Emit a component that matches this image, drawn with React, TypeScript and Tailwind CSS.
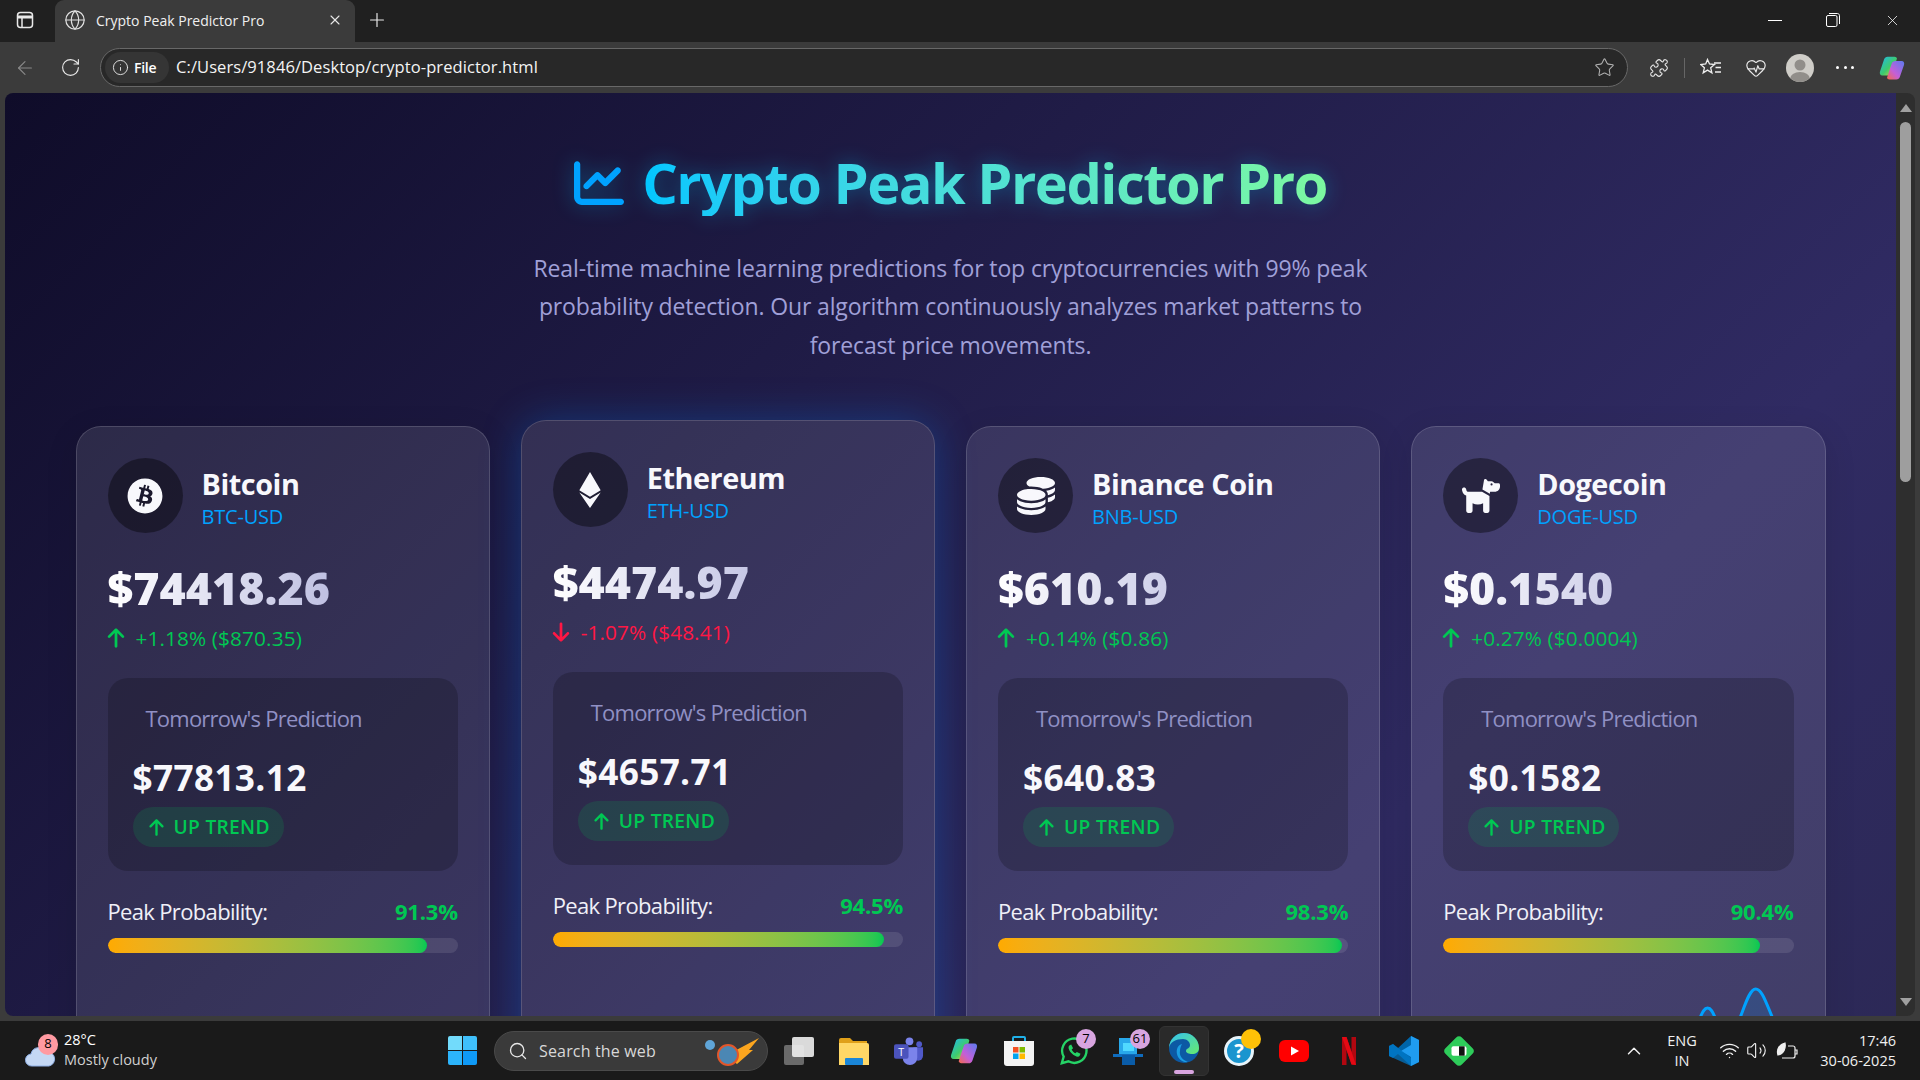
import React from 'react'
import { ArrowLeft, Globe, Info, Plus, RotateCw, Star, X, Puzzle, HeartPulse, Search, ChevronUp, Wifi, Volume2 } from 'lucide-react'
import { FaArrowDown, FaArrowUp, FaBitcoin, FaChartLine, FaCoins, FaDog, FaEthereum } from 'react-icons/fa6'

const coins = [
  { name: 'Bitcoin', symbol: 'BTC-USD', icon: <FaBitcoin className="text-[36px]" />, price: '$74418.26', change: '+1.18% ($870.35)', up: true, pred: '$77813.12', prob: 91.3 },
  { name: 'Ethereum', symbol: 'ETH-USD', icon: <FaEthereum className="text-[36px]" />, price: '$4474.97', change: '-1.07% ($48.41)', up: false, pred: '$4657.71', prob: 94.5 },
  { name: 'Binance Coin', symbol: 'BNB-USD', icon: <FaCoins className="text-[38px]" />, price: '$610.19', change: '+0.14% ($0.86)', up: true, pred: '$640.83', prob: 98.3 },
  { name: 'Dogecoin', symbol: 'DOGE-USD', icon: <FaDog className="text-[38px]" />, price: '$0.1540', change: '+0.27% ($0.0004)', up: true, pred: '$0.1582', prob: 90.4 },
]

const sparkLine = 'M230 90 C245 80 250 60 256 44 C259 36 261 33 264 33 C267 33 269 36 272 44 C276 56 285 60 292 52 C298 44 304 14 312 14 C319 14 323 30 332 50 C338 62 345 70 349 75'

const CoinCard = ({ coin, lifted, showSpark }: { coin: (typeof coins)[number]; lifted: boolean; showSpark: boolean }) => (
  <div className={`h-[1000px] rounded-[25px] border border-white/15 bg-white/10 p-[31px] ${lifted ? '-translate-y-1.5 shadow-[0_0_40px_rgba(0,130,255,0.28)]' : 'shadow-[0_8px_32px_rgba(0,0,0,0.12)]'}`}>
    <div className="flex items-center gap-[19px]">
      <div className="flex h-[75px] w-[75px] items-center justify-center rounded-full bg-black/40 text-[#f8f8fc]">{coin.icon}</div>
      <div className="pt-[3px]">
        <div className="text-[28.8px] leading-[36px] font-bold tracking-[-0.015em] text-[#f8f8fc]">{coin.name}</div>
        <div className="mt-[3px] text-[20px] leading-[24px] tracking-[-0.01em] text-[#00a2ff]">{coin.symbol}</div>
      </div>
    </div>
    <div className="mt-[28px] bg-gradient-to-r from-white to-[#9c9cd0] bg-clip-text text-[44.8px] leading-[54px] font-extrabold text-transparent">{coin.price}</div>
    <div className={`mt-[9px] flex h-[28px] items-center gap-[9px] text-[20.8px] tracking-[0.005em] ${coin.up ? 'text-[#00c853]' : 'text-[#ff1744]'}`}>
      {coin.up ? <FaArrowUp className="-ml-[3px] text-[22px]" /> : <FaArrowDown className="-ml-[3px] text-[22px]" />}
      <span>{coin.change}</span>
    </div>
    <div className="mt-[26px] h-[193px] rounded-[20px] bg-black/20 px-[25px] pt-[24px]">
      <div className="pl-[13px] text-[22px] leading-[32px] tracking-[-0.035em] text-[#9090c4]">Tomorrow's Prediction</div>
      <div className="mt-[22px] text-[35.2px] leading-[42px] font-bold tracking-[0.01em] text-[#f8f8fc]">{coin.pred}</div>
      <div className="mt-[9px] inline-flex h-[40px] items-center gap-[8px] rounded-[20px] bg-[#00c853]/15 px-[14px] text-[19.2px] font-semibold tracking-[0.015em] text-[#00c853]">
        <FaArrowUp className="text-[19px]" />
        UP TREND
      </div>
    </div>
    <div className="mt-[25px] flex items-center justify-between text-[22px] leading-[30px]">
      <span className="tracking-[-0.03em] text-[#f0f0f8]">Peak Probability:</span>
      <span className="font-bold tracking-[-0.01em] text-[#00c853]">{coin.prob}%</span>
    </div>
    <div className="mt-[12px] h-[15px] overflow-hidden rounded-full bg-white/10">
      <div className="h-full rounded-full bg-gradient-to-r from-[#ffaa00] to-[#00c853]" style={{ width: `${coin.prob}%` }} />
    </div>
    <div className="mt-[22px] h-[200px]">
      {showSpark && (
        <svg viewBox="0 0 349 200" className="h-full w-full" fill="none">
          <path d={`${sparkLine} L349 200 L230 200 Z`} fill="#00a2ff" fillOpacity="0.15" />
          <path d={sparkLine} stroke="#00a2ff" strokeWidth="3" />
        </svg>
      )}
    </div>
  </div>
)

const Badge = ({ children, color = 'bg-[#d8a5e0]' }: { children?: React.ReactNode; color?: string }) => (
  <span className={`absolute -top-[7px] -right-[7px] flex h-[20px] w-[20px] items-center justify-center rounded-full text-[13px] text-black ${color}`}>{children}</span>
)

const TaskIcon = ({ children, className = 'mx-[12px]', badge, color }: { children: React.ReactNode; className?: string; badge?: string; color?: string }) => (
  <div className={`relative flex h-[30px] w-[30px] shrink-0 items-center justify-center ${className}`}>
    {children}
    {(badge !== undefined) && <Badge color={color}>{badge}</Badge>}
  </div>
)

const CopilotIcon = ({ size }: { size: number }) => (
  <svg width={size} height={size} viewBox="0 0 32 32">
    <defs>
      <linearGradient id={`cp1${size}`} x1="0" y1="0" x2="1" y2="1"><stop offset="0" stopColor="#1fb8f0" /><stop offset="0.55" stopColor="#3ecb6c" /><stop offset="1" stopColor="#f5d33c" /></linearGradient>
      <linearGradient id={`cp2${size}`} x1="1" y1="0" x2="0" y2="1"><stop offset="0" stopColor="#5a7bf0" /><stop offset="0.6" stopColor="#c45fd8" /><stop offset="1" stopColor="#f56a4a" /></linearGradient>
    </defs>
    <path d="M11 3h8c1.5 0 2.2.8 2.7 2L16 22c-.5 1.5-1.5 2.500-3 2.500H5C2.500 24.500 1.500 22.500 2.300 20L7 6c.7-2 2-3 4-3z" fill={`url(#cp1${size})`} />
    <path d="M21 8h6c2.500 0 3.500 2 2.700 4.500L25 26c-.7 2-2 3-4 3h-8c-1.500 0-2.200-.8-2.700-2L16 10c.5-1.500 3-2 5-2z" fill={`url(#cp2${size})`} />
  </svg>
)

const App = () => {
  return (
    <div className="flex h-screen w-full flex-col overflow-hidden bg-[#3b3b3b] font-['Open_Sans',sans-serif]">
      {/* tab strip */}
      <div className="flex h-[42px] shrink-0 items-end bg-[#202020] text-white">
        <div className="flex h-[42px] w-[55px] items-center justify-center pr-[6px] pb-[2px]">
          <svg width="18" height="18" viewBox="0 0 18 18" fill="none" stroke="#e8e8e8" strokeWidth="1.5"><rect x="1.500" y="1.500" width="15" height="15" rx="3" /><path d="M1.500 6h15" strokeWidth="3" /><path d="M6 6v10" /></svg>
        </div>
        <div className="flex h-[42px] w-[300px] items-center rounded-t-[9px] bg-[#3b3b3b] pr-[12px] pb-[2px] pl-[9px]">
          <Globe size={22} strokeWidth={1.3} className="text-[#e0e0e0]" />
          <span className="ml-[10px] flex-1 text-[14px] text-[#f0f0f0]">Crypto Peak Predictor Pro</span>
          <X size={16} strokeWidth={1.6} className="text-[#e8e8e8]" />
        </div>
        <div className="flex h-[42px] w-[44px] items-center justify-center pb-[2px]"><Plus size={22} strokeWidth={1.3} className="text-[#e8e8e8]" /></div>
        <div className="ml-auto flex h-[42px] items-center gap-[44px] pr-[19px] pb-[2px]">
          <div className="h-[1px] w-[14px] bg-white" />
          <svg width="14" height="14" viewBox="0 0 14 14" fill="none" stroke="#fff" strokeWidth="1"><rect x="0.500" y="2.500" width="10.500" height="11" rx="1.500" /><path d="M3 .5h8.500c1 0 2 1 2 2V11" /></svg>
          <X size={17} strokeWidth={1.1} className="text-white" />
        </div>
      </div>

      {/* toolbar */}
      <div className="flex h-[51px] shrink-0 items-center text-[#e8e8e8]">
        <div className="flex w-[50px] justify-center"><ArrowLeft size={22} strokeWidth={1.2} className="text-[#8a8a8a]" /></div>
        <div className="flex w-[40px] justify-center"><RotateCw size={21} strokeWidth={1.3} /></div>
        <div className="ml-[10px] flex h-[39px] w-[1528px] items-center rounded-full border-[1.5px] border-[#686868] bg-[#282828] pr-[12px] pl-[4px]">
          <div className="flex h-[31px] w-[64px] items-center gap-[5px] rounded-full bg-[#353535] pl-[7px]">
            <Info size={17} strokeWidth={1.3} />
            <span className="text-[14px] font-semibold tracking-[-0.02em] text-white">File</span>
          </div>
          <span className="ml-[7px] flex-1 text-[16.500px] tracking-[0.005em] text-[#f4f4f4]">C:/Users/91846/Desktop/crypto-predictor.html</span>
          <Star size={21} strokeWidth={1.2} className="text-[#b0b0b0]" />
        </div>
        <div className="ml-[20px] flex w-[22px] justify-center"><Puzzle size={20} strokeWidth={1.3} /></div>
        <div className="ml-[14px] h-[20px] w-[1px] bg-[#666]" />
        <div className="ml-[15px]">
          <svg width="22" height="20" viewBox="0 0 22 20" fill="none" stroke="#eee" strokeWidth="1.300"><path d="M7.500 1.500l2 4.500 5 .5-3.800 3.300 1.200 5-4.400-2.700-4.300 2.700 1.200-5L.7 6.500l5-.5z" /><path d="M14 5h7M15.500 9.500H21M15 14h6" /></svg>
        </div>
        <div className="ml-[23px]"><HeartPulse size={22} strokeWidth={1.3} /></div>
        <div className="ml-[19px] flex h-[28px] w-[28px] items-end justify-center overflow-hidden rounded-full bg-[#cfcdc8]">
          <svg width="28" height="28" viewBox="0 0 28 28" fill="#918e8a"><circle cx="14" cy="11" r="5.500" /><ellipse cx="14" cy="25" rx="10" ry="7" /></svg>
        </div>
        <div className="ml-[22px] flex w-[18px] justify-between">
          <span className="h-[3px] w-[3px] rounded-full bg-white" />
          <span className="h-[3px] w-[3px] rounded-full bg-white" />
          <span className="h-[3px] w-[3px] rounded-full bg-white" />
        </div>
        <div className="ml-[24px]"><CopilotIcon size={28} /></div>
      </div>

      {/* page */}
      <div className="mx-[5px] flex h-[923px] shrink-0 overflow-hidden rounded-t-[8px] rounded-b-[8px]">
        <div className="min-w-0 flex-1 overflow-hidden">
          <div className="h-[2340px] bg-[linear-gradient(135deg,#0f0c29,#302b63,#24243e)] pt-[56px]">
            <h1 className="flex items-center justify-center gap-[18px] text-[56px] leading-[67px] font-bold drop-shadow-[0_0_10px_rgba(0,198,255,0.35)]">
              <FaChartLine className="text-[#00a2ff]" size={50} />
              <span className="bg-gradient-to-r from-[#00c6ff] to-[#7cf8a0] bg-clip-text tracking-[-0.027em] text-transparent">Crypto Peak Predictor Pro</span>
            </h1>
            <p className="mt-[33px] text-center text-[23px] leading-[38.400px] tracking-[-0.006em] text-[#a0a0d8]">
              Real-time machine learning predictions for top cryptocurrencies with 99% peak<br />
              probability detection. Our algorithm continuously analyzes market patterns to<br />
              forecast price movements.
            </p>
            <div className="mx-auto mt-[62px] grid w-[1750px] grid-cols-4 gap-[31px]">
              {coins.map((coin, i) => (
                <CoinCard key={coin.name} coin={coin} lifted={i === 1} showSpark={i === 3} />
              ))}
            </div>
          </div>
        </div>
        <div className="flex w-[19px] shrink-0 flex-col items-center bg-[#2e2e2e]">
          <div className="mt-[11px] h-0 w-0 border-x-[6px] border-b-[8px] border-x-transparent border-b-[#a0a0a0]" />
          <div className="mt-[10px] h-[360px] w-[11px] rounded-full bg-[#9e9e9e]" />
          <div className="mt-auto mb-[10px] h-0 w-0 border-x-[6px] border-t-[8px] border-x-transparent border-t-[#a0a0a0]" />
        </div>
      </div>

      {/* taskbar */}
      <div className="mt-auto flex h-[59px] shrink-0 items-center bg-[#1a1a1a] text-white">
        <div className="relative ml-[24px] h-[30px] w-[32px]">
          <svg width="32" height="24" viewBox="0 0 32 24" className="mt-[8px]"><path d="M8 22a6 6 0 0 1-1-12 8 8 0 0 1 15-2 7 7 0 0 1 3 14z" fill="#c4d8f4" stroke="#8fb0e6" /></svg>
          <span className="absolute -top-[2px] left-[14px] flex h-[21px] w-[20px] items-center justify-center rounded-full bg-[#ff9aa2] text-[13px] text-black">8</span>
        </div>
        <div className="ml-[8px] w-[100px] pb-[2px] text-[14.500px] leading-[20px]">
          <div>28°C</div>
          <div className="text-[#d0d0d0]">Mostly cloudy</div>
        </div>
        <div className="ml-[284px] grid h-[29px] w-[29px] grid-cols-2 gap-[1.500px]">
          <span className="rounded-tl-[2px] bg-[#72dbfb]" /><span className="rounded-tr-[2px] bg-[#3fc0fb]" />
          <span className="rounded-bl-[2px] bg-[#2cb4fb]" /><span className="rounded-br-[2px] bg-[#0f9af7]" />
        </div>
        <div className="ml-[17px] flex h-[40px] w-[274px] items-center rounded-full border border-[#4a4a4a] bg-[#3a3a3a] pl-[13px]">
          <Search size={20} strokeWidth={1.6} className="text-[#e8e8e8]" />
          <span className="ml-[11px] flex-1 text-[16px] tracking-[0.01em] text-[#d8d8d8]">Search the web</span>
          <svg width="60" height="30" viewBox="0 0 60 30" className="mr-[6px]">
            <path d="M24 20L58 2 48 14 52 14 36 28z" fill="#fba51e" />
            <circle cx="27" cy="19" r="10" fill="#4b87b4" stroke="#e2562a" strokeWidth="2" />
            <circle cx="9" cy="9" r="5" fill="#5fa5d8" />
          </svg>
        </div>
        <TaskIcon className="ml-[16px]">
          <div className="relative h-[28px] w-[30px]">
            <div className="absolute bottom-0 left-0 h-[20px] w-[20px] rounded-[2px] bg-[#6a6a6a]" />
            <div className="absolute top-0 right-0 h-[20px] w-[22px] rounded-[2px] bg-[#f0f0f0]/90" />
          </div>
        </TaskIcon>
        <TaskIcon className="ml-[25px]">
          <svg width="30" height="28" viewBox="0 0 30 28"><path d="M0 3a2 2 0 0 1 2-2h9l3 3h14v22a2 2 0 0 1-2 2H0z" fill="#e0a019" /><path d="M0 6h28a2 2 0 0 1 2 2v20H0z" fill="#ffd766" /><rect x="6" y="21" width="18" height="7" rx="1" fill="#1a86d8" /></svg>
        </TaskIcon>
        <TaskIcon className="ml-[25px]">
          <svg width="31" height="30" viewBox="0 0 31 30"><circle cx="16" cy="5" r="4" fill="#7b83eb" /><circle cx="26" cy="8" r="3" fill="#5059c9" /><path d="M20 11h10v9a5 5 0 0 1-10 0z" fill="#5059c9" /><path d="M9 11h15v11a7 7 0 0 1-15 0z" fill="#7b83eb" /><rect x="0" y="8" width="15" height="15" rx="2" fill="#4b53bc" /><text x="7.500" y="20" fontSize="11" fill="#fff" textAnchor="middle" fontFamily="Open Sans">T</text></svg>
        </TaskIcon>
        <TaskIcon className="ml-[25px]"><CopilotIcon size={30} /></TaskIcon>
        <TaskIcon className="ml-[25px]">
          <svg width="30" height="32" viewBox="0 0 30 32"><path d="M9 7V3a1 1 0 0 1 1-1h10a1 1 0 0 1 1 1v4" fill="none" stroke="#1fb0e8" strokeWidth="2" /><path d="M0 6h30v22a3 3 0 0 1-3 3H3a3 3 0 0 1-3-3z" fill="#f4f4f4" /><rect x="9" y="12" width="5.500" height="5.500" fill="#f25022" /><rect x="15.500" y="12" width="5.500" height="5.500" fill="#7fba00" /><rect x="9" y="18.500" width="5.500" height="5.500" fill="#00a4ef" /><rect x="15.500" y="18.500" width="5.500" height="5.500" fill="#ffb900" /></svg>
        </TaskIcon>
        <TaskIcon className="ml-[25px]" badge="7">
          <svg width="32" height="32" viewBox="0 0 32 32" fill="none"><path d="M3 29l2-7a13 13 0 1 1 5 5z" stroke="#25d366" strokeWidth="2.500" /><path d="M11 10c-2 2 0 6 3 9s7 4 8 2l1-2-4-2-1.500 1.500c-1.500-.5-3.500-2.500-4-4L15 13l-2-4z" fill="#25d366" /></svg>
        </TaskIcon>
        <TaskIcon className="ml-[24px]" badge="61">
          <svg width="30" height="30" viewBox="0 0 30 30"><rect x="6" y="2" width="18" height="17" fill="#28a8ea" /><rect x="10" y="7" width="11" height="8" fill="#50d9ff" /><rect x="0" y="18" width="30" height="3" fill="#0f6cbd" /><rect x="9" y="19" width="13" height="10" fill="#0a5ca8" /></svg>
        </TaskIcon>
        <div className="relative ml-[16px] flex h-[50px] w-[50px] shrink-0 items-center justify-center rounded-[6px] border border-[#333] bg-[#2a2a2a]">
          <svg width="30" height="32" viewBox="0 0 30 32" className="-mt-[6px]"><defs><linearGradient id="edg" x1="0" y1="0" x2="1" y2="1"><stop offset="0" stopColor="#35c1f1" /><stop offset="1" stopColor="#66eb6e" /></linearGradient></defs><circle cx="15" cy="16" r="15" fill="#0c59a4" /><path d="M0 16A15 15 0 0 1 30 16c0 4-3 6-7 6-3 0-6-1-6-3 0-3 4-2 4-6 0-3-3-6-7-6C7 7 1 10 0 16z" fill="url(#edg)" /><path d="M13 12c-4 1-6 5-5 10s6 9 11 8c-6-2-9-7-8-11 0-3 1-5 2-7z" fill="#1b9de2" /></svg>
          <span className="absolute bottom-[1px] h-[4px] w-[20px] rounded-full bg-[#d8a5e0]" />
        </div>
        <TaskIcon className="ml-[15px]" badge="" color="bg-[#ffc107]">
          <div className="flex h-[30px] w-[30px] items-center justify-center rounded-full border-[3px] border-[#e8f4fa] bg-[#1a95cf] text-[20px] leading-none font-bold text-white">?</div>
        </TaskIcon>
        <TaskIcon className="ml-[25px]">
          <svg width="30" height="22" viewBox="0 0 30 22"><rect width="30" height="22" rx="6" fill="#f00" /><path d="M12 6.500l8 4.500-8 4.500z" fill="#fff" /></svg>
        </TaskIcon>
        <TaskIcon className="ml-[25px]">
          <svg width="14" height="28" viewBox="0 0 14 28"><path d="M0 0h4.500l5 15V0H14v28l-4.500-.6-5-15V28H0z" fill="#b20710" /><path d="M0 0h4.500l9.500 28-4.500-.6z" fill="#e50914" /></svg>
        </TaskIcon>
        <TaskIcon className="ml-[25px]">
          <svg width="30" height="30" viewBox="0 0 30 30"><path d="M22 0l8 4v22l-8 4L9 18l-5 4-4-2V10l4-2 5 4z" fill="#0065a9" /><path d="M22 0l8 4v22l-8 4V21L12 15l10-6z" fill="#1f9cf0" /><path d="M0 10l4-2 18 14v8L0 20z" fill="#007acc" opacity="0.7" /></svg>
        </TaskIcon>
        <TaskIcon className="ml-[25px]">
          <svg width="32" height="32" viewBox="0 0 32 32"><path d="M13 1.500a4 4 0 0 1 6 0L30.500 13a4 4 0 0 1 0 6L19 30.500a4 4 0 0 1-6 0L1.500 19a4 4 0 0 1 0-6z" fill="#2ecc5a" /><rect x="8" y="11" width="16" height="10" rx="2" fill="#fff" /><rect x="16" y="11" width="6" height="10" fill="#111" /></svg>
        </TaskIcon>
        <ChevronUp size={22} strokeWidth={1.6} className="ml-[149px] shrink-0 text-[#f0f0f0]" />
        <div className="ml-[17px] w-[40px] shrink-0 text-center text-[14.500px] leading-[20px] text-[#f0f0f0]">
          <div>ENG</div>
          <div>IN</div>
        </div>
        <Wifi size={21} strokeWidth={1.6} className="ml-[17px] shrink-0 text-[#f0f0f0]" />
        <Volume2 size={21} strokeWidth={1.3} className="ml-[6px] shrink-0 text-[#f0f0f0]" />
        <svg width="22" height="18" viewBox="0 0 22 18" fill="none" stroke="#f0f0f0" strokeWidth="1.200" className="ml-[9px] shrink-0"><path d="M6 16h11a2 2 0 0 0 2-2V6a2 2 0 0 0-2-2h-5" /><path d="M19 8h2v4h-2" /><path d="M2 13C0 7 4 2 9 1c1 5-1 11-7 12z" fill="#f0f0f0" /></svg>
        <div className="ml-auto pr-[24px] text-right text-[14.500px] leading-[20px] whitespace-nowrap text-[#f0f0f0]">
          <div>17:46</div>
          <div>30-06-2025</div>
        </div>
      </div>
    </div>
  )
}

export default App
